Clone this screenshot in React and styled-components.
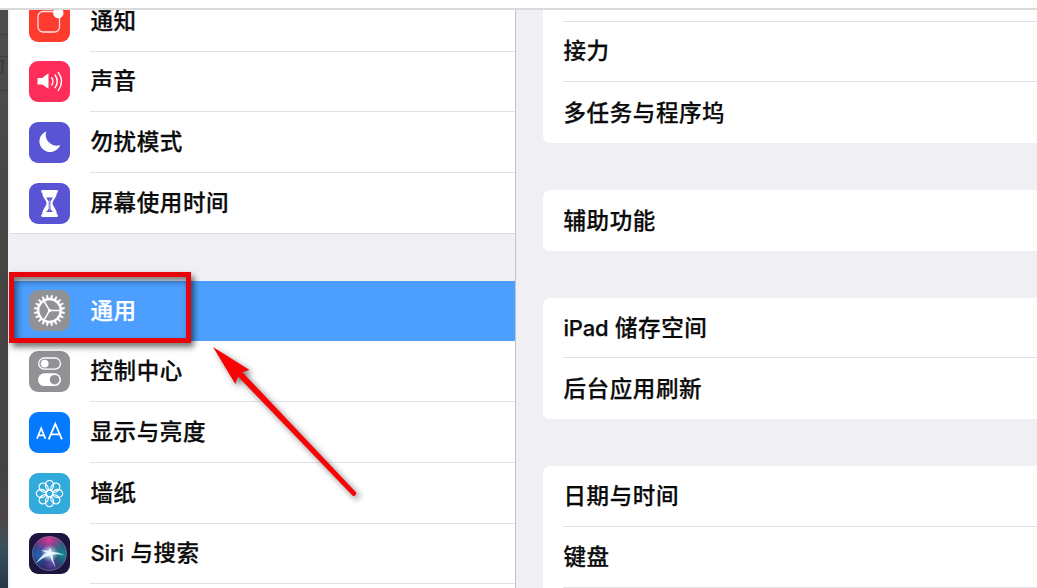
import React from "react";
import styled, { createGlobalStyle, css } from "styled-components";

const Global = createGlobalStyle`
  * { box-sizing: border-box; }
  body {
    margin: 0;
    overflow: hidden;
    background: #fff;
    font-family: Inter, "Noto Sans CJK SC", sans-serif;
    color: #0b0b0b;
  }
`;

const Screen = styled.div`
  position: relative;
  display: flex;
  flex-direction: column;
  width: 1037px;
  height: 588px;
  overflow: hidden;
`;

const TopBar = styled.div`
  flex: none;
  height: 10px;
  background: #fff;
  border-bottom: 2px solid #dadada;
`;

const Body = styled.div`
  display: flex;
  flex: 1;
  min-height: 0;
`;

const Backdrop = styled.div`
  flex: none;
  width: 8px;
  overflow: hidden;
  background: linear-gradient(#4b4b4b 0 15%, #464644 30%, #444341 80%, #4b4644 88%, #39505b 93%, #263849 100%);
`;

const BackdropCell = styled.div`
  height: ${(p) => p.$height}px;
  border-bottom: 1px solid #3d3d3d;
  color: #343434;
  font-size: 15px;
  line-height: 20px;
  direction: rtl;
  white-space: nowrap;
  padding-right: 3px;
`;

const Sidebar = styled.div`
  flex: none;
  width: 508px;
  overflow: hidden;
  background: #efeff4;
  border-right: 1px solid #c3c3c7;
  border-left: 2px solid #f1f1f4;
`;

const MenuGroup = styled.div`
  background: #fff;
  margin-top: ${(p) => p.$top}px;
  ${(p) => (p.$closed ? css`box-shadow: inset 0 -1px #dcdce0;` : css`padding-bottom: 12px;`)}
`;

const Label = styled.div`
  flex: 1;
  display: flex;
  align-items: center;
  height: 100%;
  padding-left: 0.5px;
  font-size: 22.5px;
  font-weight: 500;
  letter-spacing: 0.6px;
  line-height: 30px;
  white-space: pre;
  -webkit-text-stroke: 0.25px currentColor;
  border-bottom: ${(p) => (p.$line ? "1.5px solid #e2e2e4" : "0")};
`;

const Latin = styled.span`
  font-size: 22px;
  letter-spacing: -0.2px;
`;

const MenuRow = styled.div`
  display: flex;
  align-items: center;
  gap: 20px;
  height: 60.75px;
  padding-left: 19px;
  background: ${(p) => (p.$selected ? "#4c9fff" : "transparent")};
  color: ${(p) => (p.$selected ? "#fff" : "inherit")};
`;

const IconTile = styled.svg`
  flex: none;
  display: block;
  width: 41px;
  height: 41px;
  border-radius: 9px;
  background: ${(p) => p.$color};
`;

const Detail = styled.div`
  flex: 1;
  min-width: 0;
  padding-left: 27px;
  background: #efeff4;
  overflow: hidden;
`;

const Card = styled.div`
  margin-top: ${(p) => p.$top}px;
  padding-left: 20px;
  background: #fff;
  border-radius: 7px 0 0 7px;
`;

const CardRow = styled.div`
  height: 60.7px;
`;

const Highlight = styled.div`
  position: absolute;
  left: 9px;
  top: 272px;
  width: 182px;
  height: 71px;
  border: 5px solid #e80509;
  box-shadow: 3px 4px 6px rgba(0, 0, 0, 0.55), inset 3px 4px 6px rgba(0, 0, 0, 0.5);
`;

const Arrow = styled.svg`
  position: absolute;
  left: 200px;
  top: 335px;
  width: 180px;
  height: 180px;
  filter: drop-shadow(3px 3px 3px rgba(0, 0, 0, 0.5));
`;

const range = (n) => Array.from({ length: n }, (_, i) => i);

const NotificationIcon = () => (
  <IconTile viewBox="0 0 41 41" $color="#fd3b2f">
    <path d="M25 10.5H14a5 5 0 0 0-5 5V26a5 5 0 0 0 5 5h11.5a5 5 0 0 0 5-5V16" fill="none" stroke="#fff" strokeOpacity=".85" strokeWidth="1.3" />
    <circle cx="29.3" cy="12" r="5.2" fill="#fff" />
  </IconTile>
);

const SoundIcon = () => (
  <IconTile viewBox="0 0 41 41" $color="#fe2d59">
    <path d="M8.5 17h4.7l6.3-4.7v15.5L13.2 23.5H8.5z" fill="#fff" />
    <g fill="none" stroke="#fff" strokeWidth="1.4" strokeLinecap="round">
      <path d="M22.8 16.7q2.4 3.7 0 7.3" />
      <path d="M26.1 14q4.4 6.3 0 12.7" />
      <path d="M29.3 11.4q6.5 9 0 18" />
    </g>
  </IconTile>
);

const MoonIcon = () => (
  <IconTile viewBox="0 0 41 41" $color="#5854d3">
    <path d="M17.3 9.4A10.7 10.7 0 1 0 31.2 22.9 10.8 10.8 0 0 1 17.3 9.4z" fill="#fff" />
  </IconTile>
);

const HourglassIcon = () => (
  <IconTile viewBox="0 0 41 41" $color="#5854d3">
    <path d="M13.3 7h14.5q1.2 0 1.2 1.4t-1.2 1.4c0 5.1-4.2 7.2-4.2 10.5s4.2 5.6 4.2 10.9q1.2 0 1.2 1.4t-1.2 1.4H13.3q-1.2 0-1.2-1.4t1.2-1.4c0-5.3 4.2-7.6 4.2-10.9s-4.2-5.4-4.2-10.5q-1.2 0-1.2-1.4T13.3 7z" fill="#fff" />
    <path d="M17.3 14.6h6.5q-1 2.2-2.4 3.6v7.4q.3 1.8 2.8 3.5H16.9q2.5-1.7 2.8-3.5v-7.4q-1.4-1.4-2.4-3.6z" fill="#5854d3" />
    <path d="M20.55 16v12" stroke="#fff" strokeWidth=".6" strokeOpacity=".6" />
  </IconTile>
);

const GearIcon = () => (
  <IconTile viewBox="0 0 41 41" $color="#919297">
    <g stroke="#fff">
      <circle cx="20.5" cy="20.5" r="11.3" fill="none" strokeWidth="2.3" />
      {range(20).map((i) => (
        <path key={i} d="M19.5 8.8l.4-3.6h1.2l.4 3.6z" fill="#fff" strokeWidth=".5" transform={`rotate(${i * 18 + 9} 20.5 20.5)`} />
      ))}
      {[90, 210, 330].map((a) => (
        <path key={a} d="M20.5 20.5V9.5" strokeWidth="1.5" transform={`rotate(${a} 20.5 20.5)`} />
      ))}
    </g>
    <circle cx="20.5" cy="20.5" r="1.7" fill="#fff" />
  </IconTile>
);

const TogglesIcon = () => (
  <IconTile viewBox="0 0 41 41" $color="#919296">
    <rect x="9.7" y="7" width="21.8" height="11.2" rx="5.6" fill="none" stroke="#fff" strokeWidth="1.3" />
    <circle cx="15.7" cy="12.6" r="3.9" fill="#fff" />
    <rect x="9" y="22.3" width="23" height="12.8" rx="6.4" fill="#fff" />
    <circle cx="25.6" cy="28.7" r="4.8" fill="#919296" />
  </IconTile>
);

const DisplayIcon = () => (
  <IconTile viewBox="0 0 41 41" $color="#047aff">
    <g fill="none" stroke="#fff">
      <path d="M8 26.8l4.2-10.5 4.2 10.5M9.4 23.4h5.6" strokeWidth="1.7" />
      <path d="M19.7 27.4l6.6-15.6 6.6 15.6M21.9 22.3h8.8" strokeWidth="1.8" />
    </g>
  </IconTile>
);

const FlowerIcon = () => (
  <IconTile viewBox="0 0 41 41" $color="#32aadc">
    <g fill="none" stroke="#fff" strokeWidth="1.3">
      {range(8).map((i) => (
        <ellipse key={i} cx="20.5" cy="12.3" rx="4" ry="5" transform={`rotate(${i * 45} 20.5 20.5)`} />
      ))}
      <circle cx="20.5" cy="20.5" r="3.3" />
    </g>
  </IconTile>
);

const SiriIcon = () => (
  <IconTile viewBox="0 0 41 41" $color="#1d1440">
    <defs>
      <radialGradient id="pink" cx="20" cy="7" r="18" gradientUnits="userSpaceOnUse">
        <stop offset="0" stopColor="#d13d98" />
        <stop offset=".6" stopColor="#a9358f" stopOpacity=".75" />
        <stop offset="1" stopColor="#7a2c86" stopOpacity="0" />
      </radialGradient>
      <radialGradient id="teal" cx="33" cy="21" r="17" gradientUnits="userSpaceOnUse">
        <stop offset="0" stopColor="#168c91" />
        <stop offset="1" stopColor="#168c91" stopOpacity="0" />
      </radialGradient>
      <radialGradient id="blue" cx="9" cy="22" r="15" gradientUnits="userSpaceOnUse">
        <stop offset="0" stopColor="#2763b4" />
        <stop offset="1" stopColor="#2763b4" stopOpacity="0" />
      </radialGradient>
      <radialGradient id="violet" cx="22" cy="31" r="12" gradientUnits="userSpaceOnUse">
        <stop offset="0" stopColor="#6548a5" />
        <stop offset="1" stopColor="#3a2f78" stopOpacity="0" />
      </radialGradient>
      <radialGradient id="glow" cx="20.5" cy="20.5" r="9" gradientUnits="userSpaceOnUse">
        <stop offset="0" stopColor="#fff" />
        <stop offset=".35" stopColor="#d9f4ff" stopOpacity=".7" />
        <stop offset="1" stopColor="#9cdcff" stopOpacity="0" />
      </radialGradient>
    </defs>
    <circle cx="20.5" cy="20.5" r="17" fill="#20265a" />
    {["pink", "blue", "teal", "violet"].map((id) => (
      <circle key={id} cx="20.5" cy="20.5" r="17" fill={`url(#${id})`} />
    ))}
    <circle cx="20.5" cy="20.5" r="17" fill="none" stroke="#a79bb4" strokeOpacity=".5" strokeWidth="1" />
    <circle cx="20.5" cy="20.5" r="9" fill="url(#glow)" />
    <path d="M21 14.5l1.4 4.3q7.6.4 13 3.2-7-1.4-12-.3.5 6 3.2 12.8-4.5-6.2-5.7-12Q13 24.500 7 30.500q4.500-7.500 10.500-10.700L12 17.300q4.500 0 7.300.8z" fill="#eafcff" fillOpacity=".9" />
  </IconTile>
);

const firstMenu = [
  { text: "通知", Icon: NotificationIcon },
  { text: "声音", Icon: SoundIcon },
  { text: "勿扰模式", Icon: MoonIcon },
  { text: "屏幕使用时间", Icon: HourglassIcon },
];

const secondMenu = [
  { text: "通用", Icon: GearIcon, selected: true },
  { text: "控制中心", Icon: TogglesIcon },
  { text: "显示与亮度", Icon: DisplayIcon },
  { text: "墙纸", Icon: FlowerIcon },
  { latin: "Siri", text: " 与搜索", Icon: SiriIcon },
];

const cards = [
  { top: -49.2, rows: [{ text: "" }, { text: "接力" }, { text: "多任务与程序坞" }] },
  { top: 47.3, rows: [{ text: "辅助功能" }] },
  { top: 46.8, rows: [{ latin: "iPad", text: " 储存空间" }, { text: "后台应用刷新" }] },
  { top: 47.3, rows: [{ text: "日期与时间" }, { text: "键盘" }, { text: "" }] },
];

const Menu = ({ items, top, closed }) => (
  <MenuGroup $top={top} $closed={closed}>
    {items.map(({ text, latin, Icon, selected }, i) => (
      <MenuRow key={text} $selected={selected}>
        <Icon />
        <Label $line={!selected && !(closed && i === items.length - 1)}>
          {latin && <Latin>{latin}</Latin>}
          {text}
        </Label>
      </MenuRow>
    ))}
  </MenuGroup>
);

export default function App() {
  return (
    <Screen>
      <Global />
      <TopBar />
      <Body>
        <Backdrop>
          <BackdropCell $height={25} />
          <BackdropCell $height={22} />
          <BackdropCell $height={34}>习</BackdropCell>
        </Backdrop>
        <Sidebar>
          <Menu items={firstMenu} top={-19.2} closed />
          <Menu items={secondMenu} top={46.7} />
        </Sidebar>
        <Detail>
          {cards.map(({ top, rows }, c) => (
            <Card key={c} $top={top}>
              {rows.map(({ text, latin }, i) => (
                <CardRow key={i}>
                  <Label $line={i < rows.length - 1}>
                    {latin && <Latin>{latin}</Latin>}
                    {text}
                  </Label>
                </CardRow>
              ))}
            </Card>
          ))}
        </Detail>
      </Body>
      <Highlight />
      <Arrow viewBox="0 0 180 180">
        <path d="M13 12L49.500 35 42.500 37.200 155.500 156.800A2.200 2.200 0 0 1 152 160L38 41.500 35.300 49z" fill="#f80406" />
      </Arrow>
    </Screen>
  );
}
